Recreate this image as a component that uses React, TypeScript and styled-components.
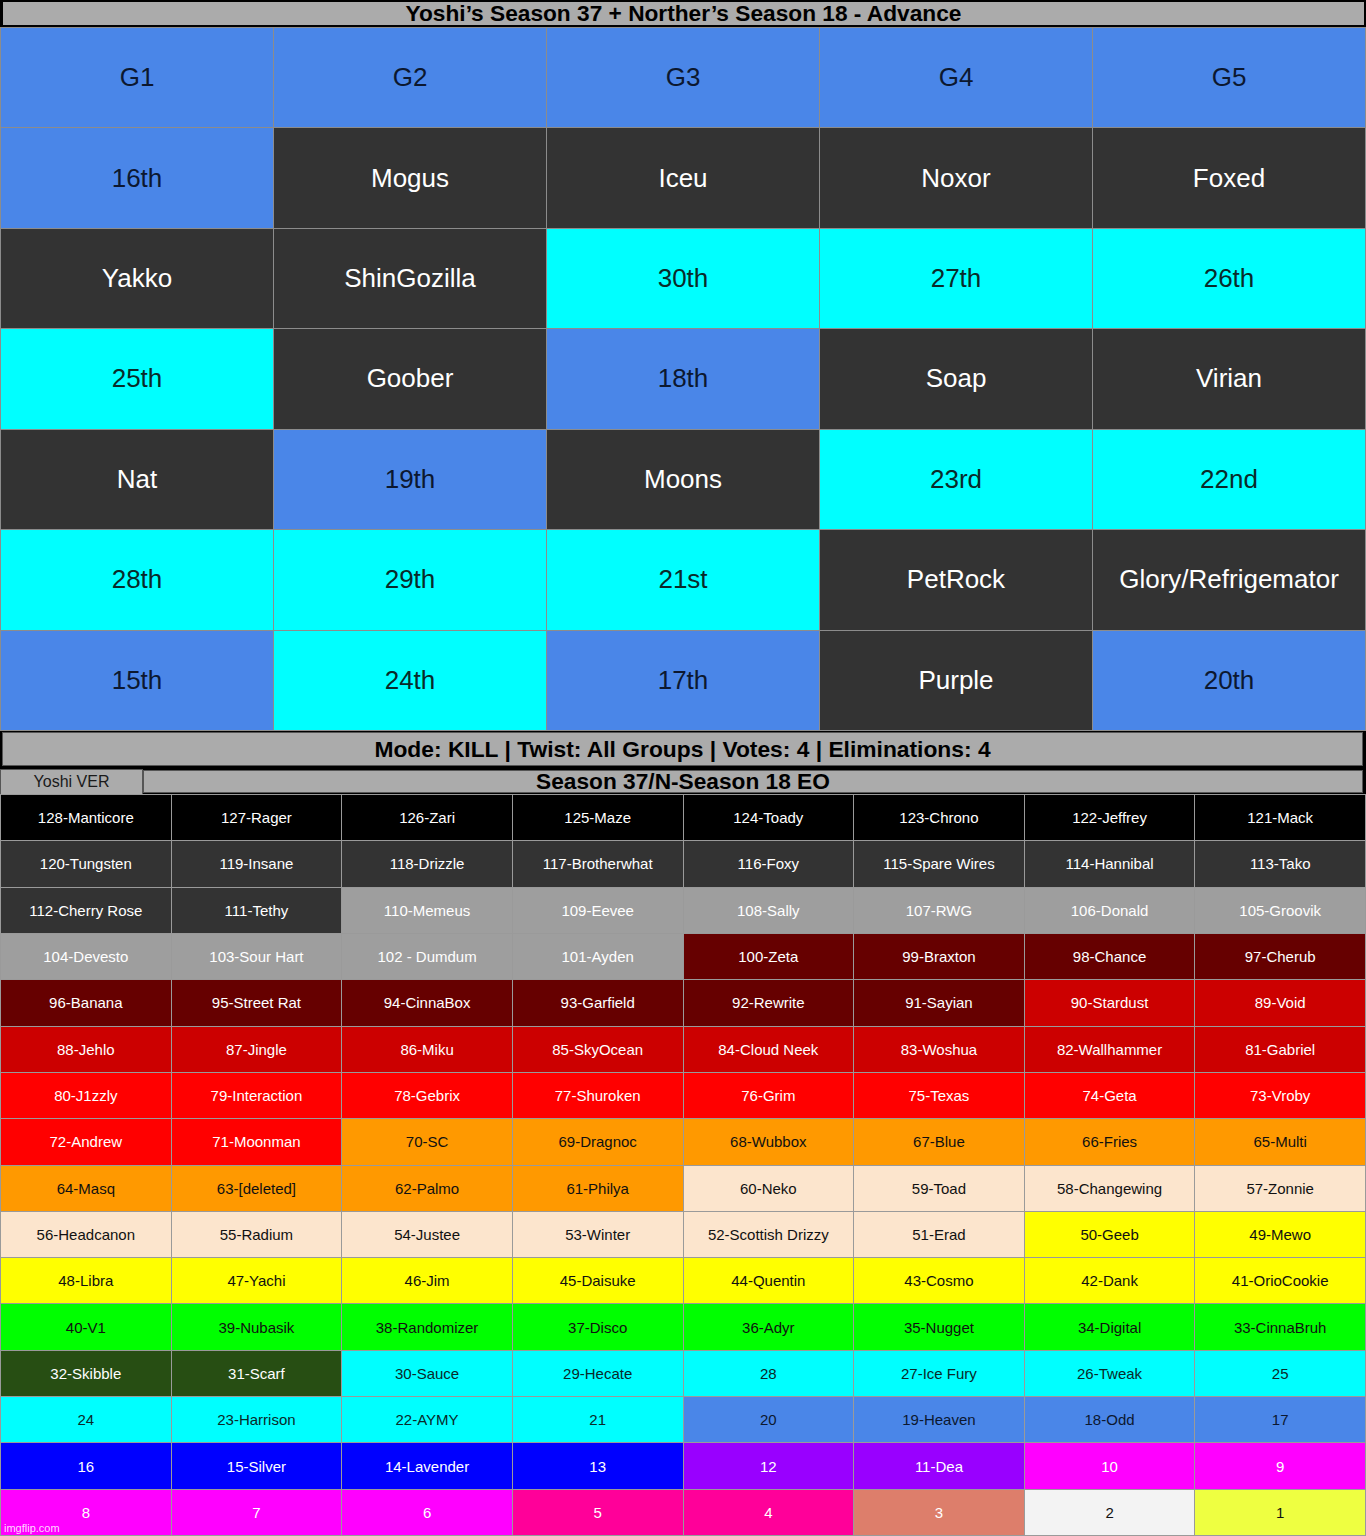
import * as React from 'react'
import styled, { createGlobalStyle } from 'styled-components'

const GlobalStyle = createGlobalStyle`
  html, body {
    margin: 0;
    padding: 0;
    background: #000;
  }
  body {
    font-family: 'Liberation Sans', Arial, sans-serif;
  }
`

const Page = styled.div`
  position: relative;
  width: 1366px;
  height: 1536px;
  background: #000;
  display: flex;
  flex-direction: column;
  overflow: hidden;
`

const TitleBar = styled.div`
  height: 23px;
  margin: 2px 2px 2px 3px;
  background: #ababab;
  display: flex;
  align-items: center;
  justify-content: center;
  font-family: 'Liberation Sans Narrow', 'Liberation Sans', sans-serif;
  font-weight: bold;
  font-size: 22.7px;
  color: #000;
`

const TopGrid = styled.div`
  height: 704px;
  display: grid;
  grid-template-columns: repeat(5, 1fr);
  grid-template-rows: repeat(7, 1fr);
  gap: 1px;
  padding: 1px;
  box-sizing: border-box;
  background: #8c8c8c;
`

const BigCell = styled.div<{ $bg: string; $fg: string }>`
  background: ${p => p.$bg};
  color: ${p => p.$fg};
  display: flex;
  align-items: center;
  justify-content: center;
  font-size: 26px;
  white-space: nowrap;
`

const ModeWrap = styled.div`
  background: #000;
  padding: 1px 3px 3px 2px;
`

const ModeBar = styled.div`
  height: 32px;
  background: #ababab;
  border: 1px solid #555;
  display: flex;
  align-items: center;
  justify-content: center;
  font-family: 'Liberation Sans Narrow', 'Liberation Sans', sans-serif;
  font-weight: bold;
  font-size: 22.8px;
  color: #000;
`

const SubRow = styled.div`
  height: 25px;
  display: flex;
  background: #000;
`

const VersionTab = styled.div`
  width: 141px;
  background: #ababab;
  border: 1px solid #555;
  border-bottom: none;
  display: flex;
  align-items: center;
  justify-content: center;
  font-size: 16px;
  color: #1a1a1a;
`

const SeasonBar = styled.div`
  flex: 1;
  margin: 1px 3px 1px 0;
  background: #ababab;
  border: 1px solid #555;
  display: flex;
  align-items: center;
  justify-content: center;
  font-family: 'Liberation Sans Narrow', 'Liberation Sans', sans-serif;
  font-weight: bold;
  font-size: 22.7px;
  color: #000;
  padding-right: 140px;
`

const ListGrid = styled.div`
  flex: 1;
  display: grid;
  grid-template-columns: repeat(8, 1fr);
  grid-template-rows: repeat(16, 1fr);
  gap: 1px;
  padding: 1px;
  box-sizing: border-box;
  background: #9a9a9a;
`

const SmallCell = styled.div<{ $bg: string; $fg: string }>`
  background: ${p => p.$bg};
  color: ${p => p.$fg};
  display: flex;
  align-items: center;
  justify-content: center;
  font-size: 15px;
  white-space: nowrap;
`

const Watermark = styled.div`
  position: absolute;
  left: 4px;
  bottom: 2px;
  font-size: 11px;
  color: rgba(255, 255, 255, 0.85);
`

const WHITE = '#ffffff'
const INK = '#111111'
const NAVY = '#0c1830'

const tones: Record<string, [string, string]> = {
  blue: ['#4a86e8', NAVY],
  dark: ['#333333', WHITE],
  cyan: ['#00ffff', '#0a2a2a'],
  black: ['#000000', WHITE],
  gray: ['#9e9e9e', WHITE],
  maroon: ['#660000', WHITE],
  crimson: ['#cc0000', WHITE],
  red: ['#ff0000', WHITE],
  orange: ['#ff9900', INK],
  peach: ['#fce5cd', INK],
  yellow: ['#ffff00', INK],
  green: ['#00ff00', INK],
  forest: ['#274e13', WHITE],
  royal: ['#0000ff', WHITE],
  purple: ['#9900ff', WHITE],
  magenta: ['#ff00ff', WHITE],
  pink: ['#ff0099', WHITE],
  salmon: ['#dd7e6b', WHITE],
  light: ['#f3f3f3', INK],
  lime: ['#eeff41', INK]
}

const topRows: [string, string][][] = [
  [['G1', 'blue'], ['G2', 'blue'], ['G3', 'blue'], ['G4', 'blue'], ['G5', 'blue']],
  [['16th', 'blue'], ['Mogus', 'dark'], ['Iceu', 'dark'], ['Noxor', 'dark'], ['Foxed', 'dark']],
  [['Yakko', 'dark'], ['ShinGozilla', 'dark'], ['30th', 'cyan'], ['27th', 'cyan'], ['26th', 'cyan']],
  [['25th', 'cyan'], ['Goober', 'dark'], ['18th', 'blue'], ['Soap', 'dark'], ['Virian', 'dark']],
  [['Nat', 'dark'], ['19th', 'blue'], ['Moons', 'dark'], ['23rd', 'cyan'], ['22nd', 'cyan']],
  [['28th', 'cyan'], ['29th', 'cyan'], ['21st', 'cyan'], ['PetRock', 'dark'], ['Glory/Refrigemator', 'dark']],
  [['15th', 'blue'], ['24th', 'cyan'], ['17th', 'blue'], ['Purple', 'dark'], ['20th', 'blue']]
]

// 128 down to 1, eight per row
const names: string[] = [
  '128-Manticore', '127-Rager', '126-Zari', '125-Maze', '124-Toady', '123-Chrono', '122-Jeffrey', '121-Mack',
  '120-Tungsten', '119-Insane', '118-Drizzle', '117-Brotherwhat', '116-Foxy', '115-Spare Wires', '114-Hannibal', '113-Tako',
  '112-Cherry Rose', '111-Tethy', '110-Memeus', '109-Eevee', '108-Sally', '107-RWG', '106-Donald', '105-Groovik',
  '104-Devesto', '103-Sour Hart', '102 - Dumdum', '101-Ayden', '100-Zeta', '99-Braxton', '98-Chance', '97-Cherub',
  '96-Banana', '95-Street Rat', '94-CinnaBox', '93-Garfield', '92-Rewrite', '91-Sayian', '90-Stardust', '89-Void',
  '88-Jehlo', '87-Jingle', '86-Miku', '85-SkyOcean', '84-Cloud Neek', '83-Woshua', '82-Wallhammer', '81-Gabriel',
  '80-J1zzly', '79-Interaction', '78-Gebrix', '77-Shuroken', '76-Grim', '75-Texas', '74-Geta', '73-Vroby',
  '72-Andrew', '71-Moonman', '70-SC', '69-Dragnoc', '68-Wubbox', '67-Blue', '66-Fries', '65-Multi',
  '64-Masq', '63-[deleted]', '62-Palmo', '61-Philya', '60-Neko', '59-Toad', '58-Changewing', '57-Zonnie',
  '56-Headcanon', '55-Radium', '54-Justee', '53-Winter', '52-Scottish Drizzy', '51-Erad', '50-Geeb', '49-Mewo',
  '48-Libra', '47-Yachi', '46-Jim', '45-Daisuke', '44-Quentin', '43-Cosmo', '42-Dank', '41-OrioCookie',
  '40-V1', '39-Nubasik', '38-Randomizer', '37-Disco', '36-Adyr', '35-Nugget', '34-Digital', '33-CinnaBruh',
  '32-Skibble', '31-Scarf', '30-Sauce', '29-Hecate', '28', '27-Ice Fury', '26-Tweak', '25',
  '24', '23-Harrison', '22-AYMY', '21', '20', '19-Heaven', '18-Odd', '17',
  '16', '15-Silver', '14-Lavender', '13', '12', '11-Dea', '10', '9',
  '8', '7', '6', '5', '4', '3', '2', '1'
]

const toneFor = (n: number): string => {
  if (n >= 121) return 'black'
  if (n >= 111) return 'dark'
  if (n >= 101) return 'gray'
  if (n >= 91) return 'maroon'
  if (n >= 81) return 'crimson'
  if (n >= 71) return 'red'
  if (n >= 61) return 'orange'
  if (n >= 51) return 'peach'
  if (n >= 41) return 'yellow'
  if (n >= 33) return 'green'
  if (n >= 31) return 'forest'
  if (n >= 21) return 'cyan'
  if (n >= 17) return 'blue'
  if (n >= 13) return 'royal'
  if (n >= 11) return 'purple'
  if (n >= 6) return 'magenta'
  if (n >= 4) return 'pink'
  if (n === 3) return 'salmon'
  if (n === 2) return 'light'
  return 'lime'
}

export default function App() {
  return (
    <Page>
      <GlobalStyle />
      <TitleBar>Yoshi’s Season 37 + Norther’s Season 18 - Advance</TitleBar>
      <TopGrid>
        {topRows.map((row, r) =>
          row.map(([label, tone], c) => {
            const [bg, fg] = tones[tone]
            return (
              <BigCell key={`${r}-${c}`} $bg={bg} $fg={fg}>
                {label}
              </BigCell>
            )
          })
        )}
      </TopGrid>
      <ModeWrap>
        <ModeBar>Mode: KILL | Twist: All Groups | Votes: 4 | Eliminations: 4</ModeBar>
      </ModeWrap>
      <SubRow>
        <VersionTab>Yoshi VER</VersionTab>
        <SeasonBar>Season 37/N-Season 18 EO</SeasonBar>
      </SubRow>
      <ListGrid>
        {names.map(name => {
          const n = parseInt(name, 10)
          const [bg, fg] = tones[toneFor(n)]
          return (
            <SmallCell key={name} $bg={bg} $fg={fg}>
              {name}
            </SmallCell>
          )
        })}
      </ListGrid>
      <Watermark>imgflip.com</Watermark>
    </Page>
  )
}
